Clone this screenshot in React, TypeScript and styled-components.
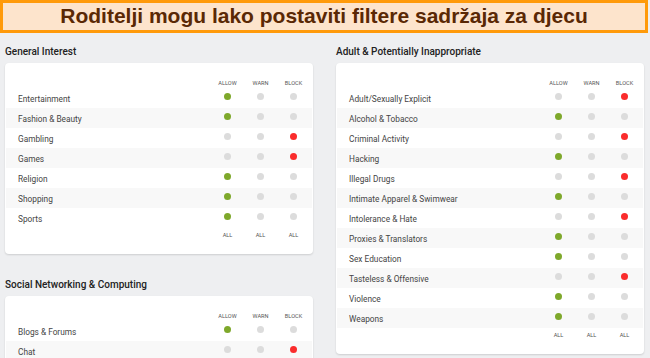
import React from 'react';
import styled, { createGlobalStyle } from 'styled-components';

type Choice = 'allow' | 'warn' | 'block';

interface Category {
  name: string;
  choice: Choice;
}

interface Group {
  title: string;
  items: Category[];
}

const generalInterest: Group = {
  title: 'General Interest',
  items: [
    { name: 'Entertainment', choice: 'allow' },
    { name: 'Fashion & Beauty', choice: 'allow' },
    { name: 'Gambling', choice: 'block' },
    { name: 'Games', choice: 'block' },
    { name: 'Religion', choice: 'allow' },
    { name: 'Shopping', choice: 'allow' },
    { name: 'Sports', choice: 'allow' },
  ],
};

const socialNetworking: Group = {
  title: 'Social Networking & Computing',
  items: [
    { name: 'Blogs & Forums', choice: 'allow' },
    { name: 'Chat', choice: 'block' },
    { name: 'Email', choice: 'allow' },
    { name: 'File Sharing', choice: 'allow' },
  ],
};

const adultContent: Group = {
  title: 'Adult & Potentially Inappropriate',
  items: [
    { name: 'Adult/Sexually Explicit', choice: 'block' },
    { name: 'Alcohol & Tobacco', choice: 'allow' },
    { name: 'Criminal Activity', choice: 'block' },
    { name: 'Hacking', choice: 'allow' },
    { name: 'Illegal Drugs', choice: 'block' },
    { name: 'Intimate Apparel & Swimwear', choice: 'allow' },
    { name: 'Intolerance & Hate', choice: 'block' },
    { name: 'Proxies & Translators', choice: 'allow' },
    { name: 'Sex Education', choice: 'allow' },
    { name: 'Tasteless & Offensive', choice: 'block' },
    { name: 'Violence', choice: 'allow' },
    { name: 'Weapons', choice: 'allow' },
  ],
};

const choices: Choice[] = ['allow', 'warn', 'block'];

const FilterSection = ({ group }: { group: Group }) => (
  <Section>
    <SectionTitle>{group.title}</SectionTitle>
    <Card>
      <HeaderRow>
        <span />
        <ColumnLabel>ALLOW</ColumnLabel>
        <ColumnLabel>WARN</ColumnLabel>
        <ColumnLabel>BLOCK</ColumnLabel>
      </HeaderRow>
      {group.items.map((item, index) => (
        <Row key={item.name} $striped={index % 2 === 1}>
          <Label>{item.name}</Label>
          {choices.map((choice) => (
            <Cell key={choice}>
              <Dot $state={item.choice === choice ? choice : 'off'} />
            </Cell>
          ))}
        </Row>
      ))}
      <FooterRow>
        <span />
        <ColumnLabel>ALL</ColumnLabel>
        <ColumnLabel>ALL</ColumnLabel>
        <ColumnLabel>ALL</ColumnLabel>
      </FooterRow>
    </Card>
  </Section>
);

const App = () => (
  <>
    <GlobalStyle />
    <Banner>Roditelji mogu lako postaviti filtere sadržaja za djecu</Banner>
    <Columns>
      <Column>
        <FilterSection group={generalInterest} />
        <FilterSection group={socialNetworking} />
      </Column>
      <Column>
        <FilterSection group={adultContent} />
      </Column>
    </Columns>
  </>
);

const GlobalStyle = createGlobalStyle`
  body {
    margin: 0;
    background-color: #eeeff1;
    font-family: Roboto, "Noto Sans", sans-serif;
    color: #333333;
  }
`;

const Banner = styled.div`
  box-sizing: border-box;
  width: 648px;
  height: 33px;
  border: 3px solid #ff9a0a;
  background-color: #fde4cc;
  font-family: "Liberation Sans", Arial, sans-serif;
  font-size: 21px;
  font-weight: 700;
  line-height: 26px;
  text-align: center;
  color: #5a2804;
`;

const Columns = styled.div`
  display: grid;
  grid-template-columns: 308px 308px;
  column-gap: 23px;
  padding: 12px 0 0 5px;
`;

const Column = styled.div`
  display: flex;
  flex-direction: column;
  gap: 24px;
`;

const Section = styled.section`
  display: flex;
  flex-direction: column;
  gap: 4px;
`;

const SectionTitle = styled.h2`
  margin: 0;
  font-size: 10px;
  font-weight: 500;
  line-height: 14px;
  color: #222222;
`;

const Card = styled.div`
  padding: 14px 1px 12px;
  border-radius: 4px;
  background-color: #ffffff;
  box-shadow: 0 1px 2px rgba(0, 0, 0, 0.14);
`;

const grid = `
  display: grid;
  grid-template-columns: 1fr 33px 33px 33px;
  padding: 0 2px 0 12px;
  align-items: center;
`;

const HeaderRow = styled.div`
  ${grid}
  height: 11px;
`;

const FooterRow = styled.div`
  ${grid}
  height: 14px;
`;

const Row = styled.div<{ $striped: boolean }>`
  ${grid}
  height: 20px;
  background-color: ${({ $striped }) => ($striped ? '#f8f8f8' : 'transparent')};
`;

const ColumnLabel = styled.span`
  font-size: 5.6px;
  line-height: 8px;
  text-align: center;
  color: #555555;
`;

const Label = styled.span`
  margin-top: 2px;
  font-size: 8.3px;
  line-height: 12px;
  color: #444444;
`;

const Cell = styled.div`
  display: flex;
  justify-content: center;
  margin-bottom: 3px;
`;

const dotColors: Record<Choice | 'off', string> = {
  allow: '#7ea82b',
  warn: '#f0b400',
  block: '#fa2c2c',
  off: '#dcdcdc',
};

const Dot = styled.span<{ $state: Choice | 'off' }>`
  width: 7px;
  height: 7px;
  border-radius: 50%;
  background-color: ${({ $state }) => dotColors[$state]};
`;

export default App;
